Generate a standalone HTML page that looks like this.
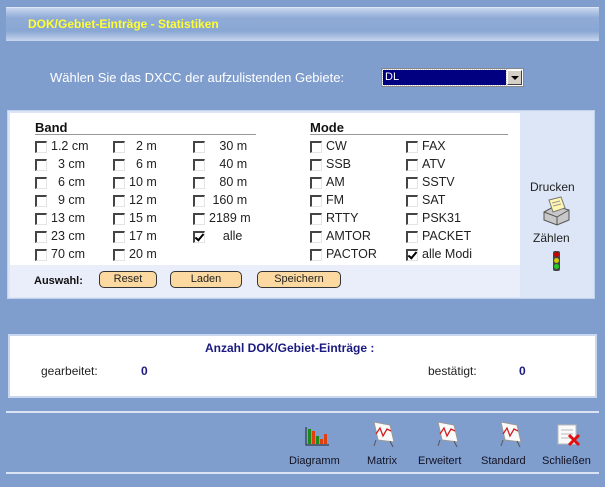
<!DOCTYPE html>
<html><head><meta charset="utf-8"><style>
*{margin:0;padding:0;box-sizing:border-box}
body{width:605px;height:487px;background:#7f9ece;position:relative;overflow:hidden;font-family:"Liberation Sans",sans-serif;font-size:12px;color:#222}
.a{position:absolute;white-space:nowrap}
.cb{position:absolute;width:12px;height:12px;border-top:2px solid #444;border-left:2px solid #444;border-right:1px solid #e4e4e4;border-bottom:1px solid #e4e4e4;background:#fff}
.cb.c::after{content:"";position:absolute;left:2px;top:-1px;width:3px;height:7px;border-right:2px solid #000;border-bottom:2px solid #000;transform:rotate(40deg)}
.btn{position:absolute;top:271px;height:17px;background:#fcd9a0;border:1px solid #333;border-radius:5px;font-size:11px;text-align:center;line-height:15px}
.lbl{position:absolute;top:455px;font-size:11px;color:#112}
</style></head><body>
<div class="a" style="left:6px;top:7px;width:593px;height:34px;background:linear-gradient(#c8d6ee,#8fabd6 30%,#8aa6d3 70%,#c8d6ee);border-top:1px solid #dde6f5"></div>
<div class="a" style="left:28px;top:17px;color:#ffff33;font-weight:bold;font-size:12px">DOK/Gebiet-Einträge - Statistiken</div>
<div class="a" style="left:50px;top:70px;color:#fff;font-size:13px">Wählen Sie das DXCC der aufzulistenden Gebiete:</div>
<div class="a" style="left:381px;top:68px;width:143px;height:19px;background:#fff;border:1px solid #888"></div>
<div class="a" style="left:383px;top:70px;width:123px;height:15px;background:#000080;color:#fff;font-size:11px;line-height:15px;padding-left:2px;outline:1px dotted #ccc">DL</div>
<div class="a" style="left:507px;top:70px;width:15px;height:15px;background:#d4d0c8;border:1px solid;border-color:#fff #404040 #404040 #fff"></div>
<div class="a" style="left:511px;top:76px;width:0;height:0;border-left:4px solid transparent;border-right:4px solid transparent;border-top:4px solid #000"></div>

<div class="a" style="left:7px;top:110px;width:588px;height:189px;background:#dbe5f5;border:1px solid #c2d1ec"></div>
<div class="a" style="left:10px;top:113px;width:510px;height:152px;background:#fff"></div>
<div class="a" style="left:10px;top:265px;width:510px;height:32px;background:#e9eefa"></div>
<div class="a" style="left:520px;top:113px;width:72px;height:184px;background:#dde6f6"></div>

<div class="a" style="left:35px;top:120px;font-weight:bold;font-size:13px;color:#111">Band</div>
<div class="a" style="left:35px;top:134px;width:221px;height:1px;background:#999"></div>
<div class="a" style="left:310px;top:120px;font-weight:bold;font-size:13px;color:#111">Mode</div>
<div class="a" style="left:310px;top:134px;width:198px;height:1px;background:#999"></div>

<div id="g"></div>
<script>
var rows=[141,159,177,195,213,231,249];
var cols=[[35,51,["1.2 cm","&nbsp;&nbsp;3 cm","&nbsp;&nbsp;6 cm","&nbsp;&nbsp;9 cm","13 cm","23 cm","70 cm"]],
[113,129,["&nbsp;&nbsp;2 m","&nbsp;&nbsp;6 m","10 m","12 m","15 m","17 m","20 m"]],
[193,209,["&nbsp;&nbsp;&nbsp;30 m","&nbsp;&nbsp;&nbsp;40 m","&nbsp;&nbsp;&nbsp;80 m","&nbsp;160 m","2189 m","&nbsp;&nbsp;&nbsp;&nbsp;alle",null]],
[310,326,["CW","SSB","AM","FM","RTTY","AMTOR","PACTOR"]],
[406,422,["FAX","ATV","SSTV","SAT","PSK31","PACKET","alle Modi"]]];
var h="";
cols.forEach(function(c,ci){c[2].forEach(function(t,i){if(t===null)return;var chk=(ci==2&&i==5)||(ci==4&&i==6);
h+='<div class="cb'+(chk?' c':'')+'" style="left:'+c[0]+'px;top:'+(rows[i])+'px"></div><div class="a" style="left:'+c[1]+'px;top:'+(rows[i]-2)+'px;font-size:12.5px">'+t+'</div>';});});
document.getElementById('g').innerHTML=h;
</script>

<div class="a" style="left:34px;top:275px;font-weight:bold;font-size:11px;color:#111">Auswahl:</div>
<div class="btn" style="left:99px;width:58px">Reset</div>
<div class="btn" style="left:170px;width:72px">Laden</div>
<div class="btn" style="left:257px;width:84px">Speichern</div>

<div class="a" style="left:530px;top:180px;font-size:12px">Drucken</div>
<svg class="a" style="left:541px;top:196px" width="30" height="30" viewBox="0 0 30 30">
<path d="M3 16 L14 10 L28 14 L28 24 L16 29 L3 24 Z" fill="#c8c8c8" stroke="#555"/>
<path d="M3 16 L16 21 L28 14" fill="none" stroke="#555"/>
<path d="M16 21 L16 29" stroke="#555"/>
<path d="M8 4 L20 1 L24 12 L12 16 Z" fill="#fff6b0" stroke="#777"/>
<path d="M11 7 L19 5 M12 10 L20 8" stroke="#999"/>
</svg>
<div class="a" style="left:533px;top:231px;font-size:12px">Zählen</div>
<div class="a" style="left:553px;top:251px;width:7px;height:20px;background:#444;border-radius:2px"></div>
<div class="a" style="left:554px;top:252px;width:5px;height:5px;background:#c00;border-radius:50%"></div>
<div class="a" style="left:554px;top:258px;width:5px;height:5px;background:#cc0;border-radius:50%"></div>
<div class="a" style="left:554px;top:264px;width:5px;height:5px;background:#2c2;border-radius:50%"></div>

<div class="a" style="left:8px;top:334px;width:589px;height:64px;background:#fff;border:2px solid #c8d6ee"></div>
<div class="a" style="left:205px;top:341px;font-weight:bold;font-size:12px;color:#1a1a80">Anzahl DOK/Gebiet-Einträge :</div>
<div class="a" style="left:41px;top:364px">gearbeitet:</div>
<div class="a" style="left:141px;top:364px;font-weight:bold;color:#1a1a80">0</div>
<div class="a" style="left:428px;top:364px">bestätigt:</div>
<div class="a" style="left:519px;top:364px;font-weight:bold;color:#1a1a80">0</div>

<div class="a" style="left:6px;top:411px;width:593px;height:2px;background:#d9e3f3"></div>
<div class="a" style="left:6px;top:472px;width:593px;height:2px;background:#d9e3f3"></div>

<svg class="a" style="left:304px;top:426px" width="26" height="20"><path d="M2 1 V19 H25" stroke="#222" fill="none"/><rect x="4" y="3" width="3" height="15" fill="#1a8a1a"/><rect x="8" y="5" width="3" height="13" fill="#e04010"/><rect x="12" y="10" width="3" height="8" fill="#1a8a1a"/><rect x="16" y="13" width="3" height="5" fill="#e04010"/><rect x="20" y="8" width="3" height="10" fill="#e04010"/></svg>
<div class="lbl" style="left:289px">Diagramm</div>

<svg width="0" height="0" style="position:absolute"><defs><g id="ch"><path d="M4 2 L20 5 L24 22 L8 20 Z" fill="#fafafa" stroke="#999"/><path d="M6 14 L10 8 L13 16 L17 9 L21 11" stroke="#d02020" fill="none" stroke-width="1.3"/><path d="M6 20 L4 26 M20 21 L23 27" stroke="#555"/></g></defs></svg>
<svg class="a" style="left:370px;top:420px" width="28" height="28"><use href="#ch"/></svg>
<div class="lbl" style="left:367px">Matrix</div>
<svg class="a" style="left:434px;top:420px" width="28" height="28"><use href="#ch"/></svg>
<div class="lbl" style="left:418px">Erweitert</div>
<svg class="a" style="left:497px;top:420px" width="28" height="28"><use href="#ch"/></svg>
<div class="lbl" style="left:481px">Standard</div>
<svg class="a" style="left:556px;top:422px" width="28" height="26"><path d="M2 3 H20 V22 H2 Z" fill="#fafafa" stroke="#bbb"/><path d="M5 8 H17 M5 12 H17 M5 16 H14" stroke="#bbb"/><path d="M13 13 L23 23 M23 13 L13 23" stroke="#e01010" stroke-width="3"/></svg>
<div class="lbl" style="left:542px">Schließen</div>
</body></html>
